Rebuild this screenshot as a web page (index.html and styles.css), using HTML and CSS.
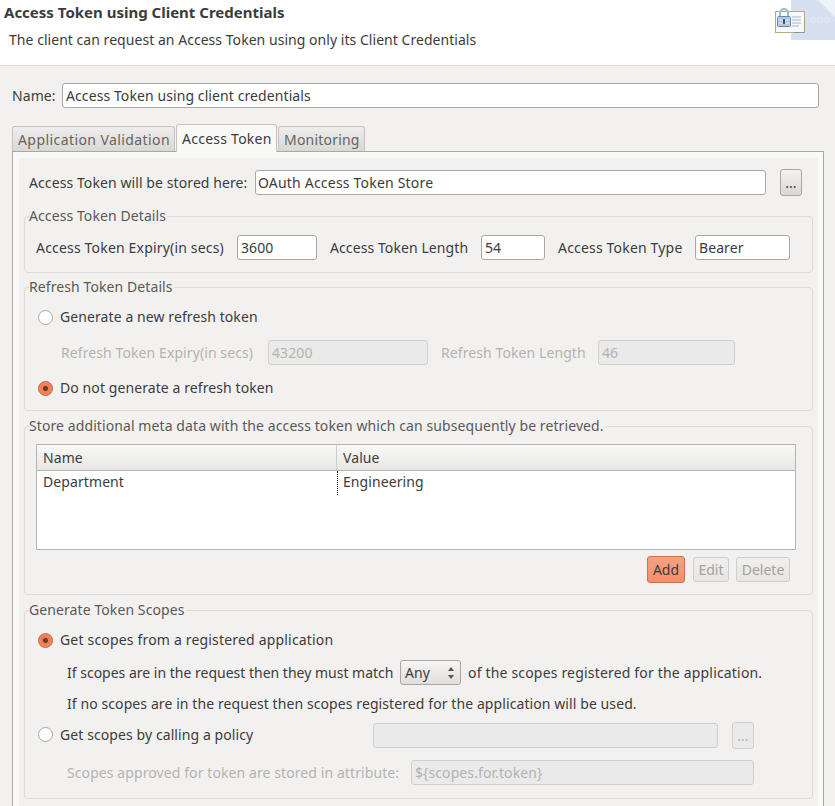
FILE: index.html
```html
<!DOCTYPE html>
<html>
<head>
    <title>Access Token using Client Credentials</title>
    <link rel="stylesheet" href="styles.css">
</head>
<body>
    <header class="banner">
        <h1>Access Token using Client Credentials</h1>
        <p>The client can request an Access Token using only its Client Credentials</p>
        <div class="banner-art">
            <svg width="44" height="40" viewBox="0 0 44 40">
                <polygon points="27,0 44,0 44,17" fill="#eef2f9"/>
                <circle cx="22" cy="20" r="2.5" fill="none" stroke="#e2e9f5"/>
                <circle cx="29" cy="20" r="2.5" fill="none" stroke="#e2e9f5"/>
                <circle cx="36" cy="20" r="2.5" fill="none" stroke="#e2e9f5"/>
            </svg>
        </div>
        <svg class="banner-icon" width="32" height="26" viewBox="0 0 32 26">
            <rect x="0.5" y="3.5" width="29" height="21" fill="#f7f9fc" stroke="#b5ab80"/>
            <path d="M19 25V24h11V12h-.5v13z" fill="#8f9a8a"/>
            <path d="M17 9h9M17 12h9M17 15h9M17 18h7" stroke="#a9b6cc" fill="none"/>
            <path d="M5 9V5a4 4 0 0 1 8 0v4" fill="none" stroke="#9dbad6" stroke-width="2"/>
            <rect x="2.5" y="8.5" width="13" height="10" rx="1" fill="#b4c8dc" stroke="#5f8bb2"/>
            <path d="M3 12h12M3 15h12" stroke="#dbe4ee"/>
            <rect x="8" y="11" width="2" height="5" fill="#44546a"/>
        </svg>
    </header>

    <main class="content">
        <div class="name-row">
            <label class="name-label">Name:</label>
            <input class="field name-input" type="text" value="Access Token using client credentials">
        </div>

        <ul class="tabs">
            <li class="tab tab-first">Application Validation</li>
            <li class="tab tab-active">Access Token</li>
            <li class="tab tab-last">Monitoring</li>
        </ul>

        <div class="pane">
            <div class="pane-inner">
                <div class="row store-row">
                    <label class="store-label">Access Token will be stored here:</label>
                    <input class="field store-input" type="text" value="OAuth Access Token Store">
                    <button class="browse">...</button>
                </div>

                <fieldset class="group group-details">
                    <legend>Access Token Details</legend>
                    <div class="row">
                        <label class="w-expiry wide">Access Token Expiry(in secs)</label>
                        <input class="field w80" type="text" value="3600">
                        <label class="w-length">Access Token Length</label>
                        <input class="field w64" type="text" value="54">
                        <label class="w-type wide">Access Token Type</label>
                        <input class="field w95" type="text" value="Bearer">
                    </div>
                </fieldset>

                <fieldset class="group group-refresh">
                    <legend>Refresh Token Details</legend>
                    <div class="radio-row">
                        <span class="radio"></span>
                        <span>Generate a new refresh token</span>
                    </div>
                    <div class="row row-gap-13 indent-refresh">
                        <label class="w-refresh off">Refresh Token Expiry(in secs)</label>
                        <input class="field w160" type="text" value="43200" disabled>
                        <label class="w-refresh-len off">Refresh Token Length</label>
                        <input class="field w137" type="text" value="46" disabled>
                    </div>
                    <div class="radio-row row-gap-13">
                        <span class="radio radio-on"></span>
                        <span>Do not generate a refresh token</span>
                    </div>
                </fieldset>

                <fieldset class="group group-meta">
                    <legend>Store additional meta data with the access token which can subsequently be retrieved.</legend>
                    <div class="table">
                        <div class="table-head">
                            <div class="col-name">Name</div>
                            <div class="col-value">Value</div>
                        </div>
                        <div class="table-row">
                            <div class="col-name">Department</div>
                            <div class="col-value cell-focus">Engineering</div>
                        </div>
                    </div>
                    <div class="table-actions">
                        <button class="btn btn-add">Add</button>
                        <button class="btn btn-off btn-edit">Edit</button>
                        <button class="btn btn-off btn-delete">Delete</button>
                    </div>
                </fieldset>

                <fieldset class="group group-scopes">
                    <legend>Generate Token Scopes</legend>
                    <div class="radio-row">
                        <span class="radio radio-on"></span>
                        <span class="wide">Get scopes from a registered application</span>
                    </div>
                    <div class="row indent-scopes scope-match">
                        <span class="w-match">If scopes are in the request then they must match</span>
                        <div class="select"><span>Any</span><span class="spin"></span></div>
                        <span class="after-select wide">of the scopes registered for the application.</span>
                    </div>
                    <div class="text-row indent-scopes">If no scopes are in the request then scopes registered for the application will be used.</div>
                    <div class="radio-row policy-row">
                        <span class="radio"></span>
                        <span class="w-policy">Get scopes by calling a policy</span>
                        <input class="field w345" type="text" disabled>
                        <button class="browse browse-off">...</button>
                    </div>
                    <div class="row indent-scopes attr-row">
                        <label class="w-attr off">Scopes approved for token are stored in attribute:</label>
                        <input class="field w343" type="text" value="${scopes.for.token}" disabled>
                    </div>
                </fieldset>
            </div>
        </div>
    </main>
</body>
</html>
```

FILE: styles.css
```css
html, body {
    height: 806px;
    overflow: hidden;
}

body {
    margin: 0;
    background-color: #f2f1f0;
    color: #3c3c3c;
    font-family: "Noto Sans", sans-serif;
    font-size: 14px;
    line-height: 20px;
    letter-spacing: 0.09px;
}

.wide {
    letter-spacing: 0.18px;
}

.banner {
    position: relative;
    height: 65px;
    background-color: #fff;
    border-bottom: 1px solid #dcdbd9;
    overflow: hidden;
}

.banner h1 {
    margin: 0;
    padding: 2px 0 0 4px;
    font-size: 15px;
    font-weight: bold;
    line-height: 20px;
    letter-spacing: 0;
}

.banner p {
    margin: 0;
    padding: 8px 0 0 9px;
    letter-spacing: 0.04px;
}

.banner-art {
    position: absolute;
    top: 0;
    right: 0;
    width: 44px;
    height: 40px;
    background-color: #d6e0f1;
}

.banner-art svg {
    display: block;
}

.banner-icon {
    position: absolute;
    top: 8px;
    left: 775px;
}

.content {
    padding: 17px 11px 0 12px;
}

.name-row {
    display: flex;
    align-items: center;
    height: 25px;
}

.name-label {
    width: 50px;
}

.name-input {
    width: 757px;
}

.field {
    box-sizing: border-box;
    height: 25px;
    margin: 0;
    padding: 0 3px;
    background-color: #fff;
    border: 1px solid #aaa8a4;
    border-radius: 3px;
    color: #3c3c3c;
    font-family: inherit;
    font-size: 14px;
    letter-spacing: inherit;
}

.field:disabled {
    background-color: #eaeaea;
    border-color: #d0cfcc;
    color: #b5b3af;
}

.tabs {
    display: flex;
    align-items: flex-end;
    height: 28px;
    margin: 16px 0 0;
    padding: 0;
    list-style-type: none;
}

.tab {
    box-sizing: border-box;
    height: 25px;
    padding: 3px 0 0 5px;
    margin-bottom: 1px;
    background: linear-gradient(#efeeed, #d9d8d6);
    border: 1px solid #c4c3bf;
    border-bottom: 0;
    border-radius: 3px 3px 0 0;
    color: #66645f;
}

.tab-first {
    width: 163px;
    letter-spacing: 0.42px;
}

.tab-last {
    width: 87px;
    margin-left: 1px;
    letter-spacing: 0.2px;
}

.tab-active {
    position: relative;
    width: 101px;
    height: 28px;
    margin: 0 0 0 1px;
    padding-top: 4px;
    background: #f8f8f7;
    color: #3c3c3c;
    letter-spacing: 0.25px;
    z-index: 1;
}

.pane {
    box-sizing: border-box;
    height: 655px;
    margin-top: -1px;
    padding: 6px 5px 0 6px;
    background-color: #f8f8f7;
    border: 1px solid #aaa8a4;
    border-bottom: 0;
}

.pane-inner {
    height: 100%;
    padding: 11px 0 0;
    background-color: #f2f1f0;
}

.row {
    display: flex;
    align-items: center;
    height: 25px;
}

.store-row {
    height: 27px;
    padding-left: 10px;
}

.store-label {
    width: 226px;
}

.store-input {
    width: 511px;
    padding-left: 2px;
    letter-spacing: 0.2px;
}

.browse {
    box-sizing: border-box;
    width: 22px;
    height: 27px;
    margin-left: 14px;
    padding: 0;
    background: linear-gradient(#f4f3f2, #d8d7d5);
    border: 1px solid #a8a7a3;
    border-radius: 3px;
    color: #3c3c3c;
    font-family: inherit;
    font-size: 14px;
}

.browse-off {
    background: #eaeaea;
    border-color: #d0cfcc;
    color: #b5b3af;
}

.group {
    min-width: 0;
    margin: 5px 5px 0;
    padding: 0 0 0 11px;
    border: 1px solid #dcdbd8;
    border-radius: 4px;
}

.group legend {
    margin-left: -7px;
    padding: 0 1px 0 0;
    color: #5a5955;
    font-size: 14px;
    line-height: 18px;
}

.group-details {
    margin-top: 11px;
    padding-top: 10px;
    padding-bottom: 12px;
}

.group-refresh {
    padding-top: 11px;
    padding-bottom: 12px;
    padding-left: 13px;
}

.group-refresh legend,
.group-scopes legend {
    margin-left: -9px;
}

.group-meta {
    margin-top: 6px;
    padding-top: 9px;
    padding-bottom: 11px;
}

.group-scopes {
    margin-top: 6px;
    padding-top: 11px;
    padding-bottom: 13px;
    padding-left: 13px;
}

.w-expiry { width: 201px; }
.w-length { width: 151px; margin-left: 13px; }
.w-type { width: 137px; margin-left: 13px; }
.w80 { width: 80px; }
.w64 { width: 64px; }
.w95 { width: 95px; }
.w160 { width: 160px; }
.w137 { width: 137px; }
.w345 { width: 345px; }
.w343 { width: 343px; }

.radio-row {
    display: flex;
    align-items: center;
    height: 20px;
}

.radio {
    box-sizing: border-box;
    flex: none;
    width: 15px;
    height: 15px;
    margin-right: 7px;
    background-color: #fdfdfd;
    border: 1px solid #a8a7a3;
    border-radius: 50%;
}

.radio-on {
    background: radial-gradient(circle, #6b3a24 0, #6b3a24 2px, #ee7a50 3px, #f4946e 100%);
    border-color: #c8603a;
}

.row-gap-13 {
    margin-top: 13px;
}

.indent-refresh {
    padding-left: 23px;
}

.w-refresh { width: 207px; }
.w-refresh-len { width: 157px; margin-left: 13px; }

.off {
    color: #b5b3af;
}

.table {
    box-sizing: border-box;
    width: 760px;
    height: 106px;
    background-color: #fff;
    border: 1px solid #b5b4b0;
}

.table-head {
    display: flex;
    height: 25px;
    background: linear-gradient(#f8f8f7, #e8e7e5);
    border-bottom: 1px solid #b5b4b0;
    line-height: 25px;
}

.table-head .col-name {
    border-right: 1px solid #cfcecb;
}

.table-row {
    display: flex;
    height: 24px;
    line-height: 22px;
}

.col-name {
    box-sizing: border-box;
    width: 300px;
    padding-left: 6px;
}

.col-value {
    padding-left: 6px;
}

.cell-focus {
    padding-left: 5px;
    border-left: 1px dotted #222;
}

.table-actions {
    display: flex;
    align-items: center;
    justify-content: flex-end;
    gap: 7px;
    width: 754px;
    height: 27px;
    margin-top: 6px;
}

.btn {
    box-sizing: border-box;
    height: 25px;
    padding: 0;
    border: 1px solid #d0cfcc;
    border-radius: 3px;
    font-family: inherit;
    font-size: 14px;
}

.btn-add {
    width: 38px;
    height: 27px;
    margin-right: 1px;
    background: linear-gradient(#f4a283, #f58e69);
    border-color: #cf6f4c;
    color: #3c3c3c;
}

.btn-off {
    background: linear-gradient(#f1f0ef, #e6e5e3);
    color: #a3a29e;
}

.btn-edit { width: 36px; }
.btn-delete { width: 54px; }

.indent-scopes {
    padding-left: 29px;
}

.scope-match {
    margin-top: 10px;
}

.w-match {
    width: 333px;
    letter-spacing: 0;
}

.select {
    box-sizing: border-box;
    display: flex;
    align-items: center;
    justify-content: space-between;
    width: 61px;
    height: 25px;
    padding: 0 5px 0 4px;
    background: linear-gradient(#f6f5f4, #dfdedc);
    border: 1px solid #a8a7a3;
    border-radius: 3px;
}

.spin {
    position: relative;
    width: 7px;
    height: 12px;
}

.spin::before,
.spin::after {
    content: "";
    position: absolute;
    left: 0;
    border-left: 3.5px solid transparent;
    border-right: 3.5px solid transparent;
}

.spin::before {
    top: 0;
    border-bottom: 4px solid #555;
}

.spin::after {
    bottom: 0;
    border-top: 4px solid #555;
}

.after-select {
    margin-left: 7px;
}

.text-row {
    height: 20px;
    margin-top: 9px;
}

.policy-row {
    height: 27px;
    margin-top: 8px;
}

.policy-row .radio,
.w-policy {
    margin-bottom: 2px;
}

.w-policy { width: 313px; }

.policy-row .browse {
    margin-left: 14px;
}

.attr-row {
    margin-top: 11px;
}

.w-attr { width: 344px; }
```
